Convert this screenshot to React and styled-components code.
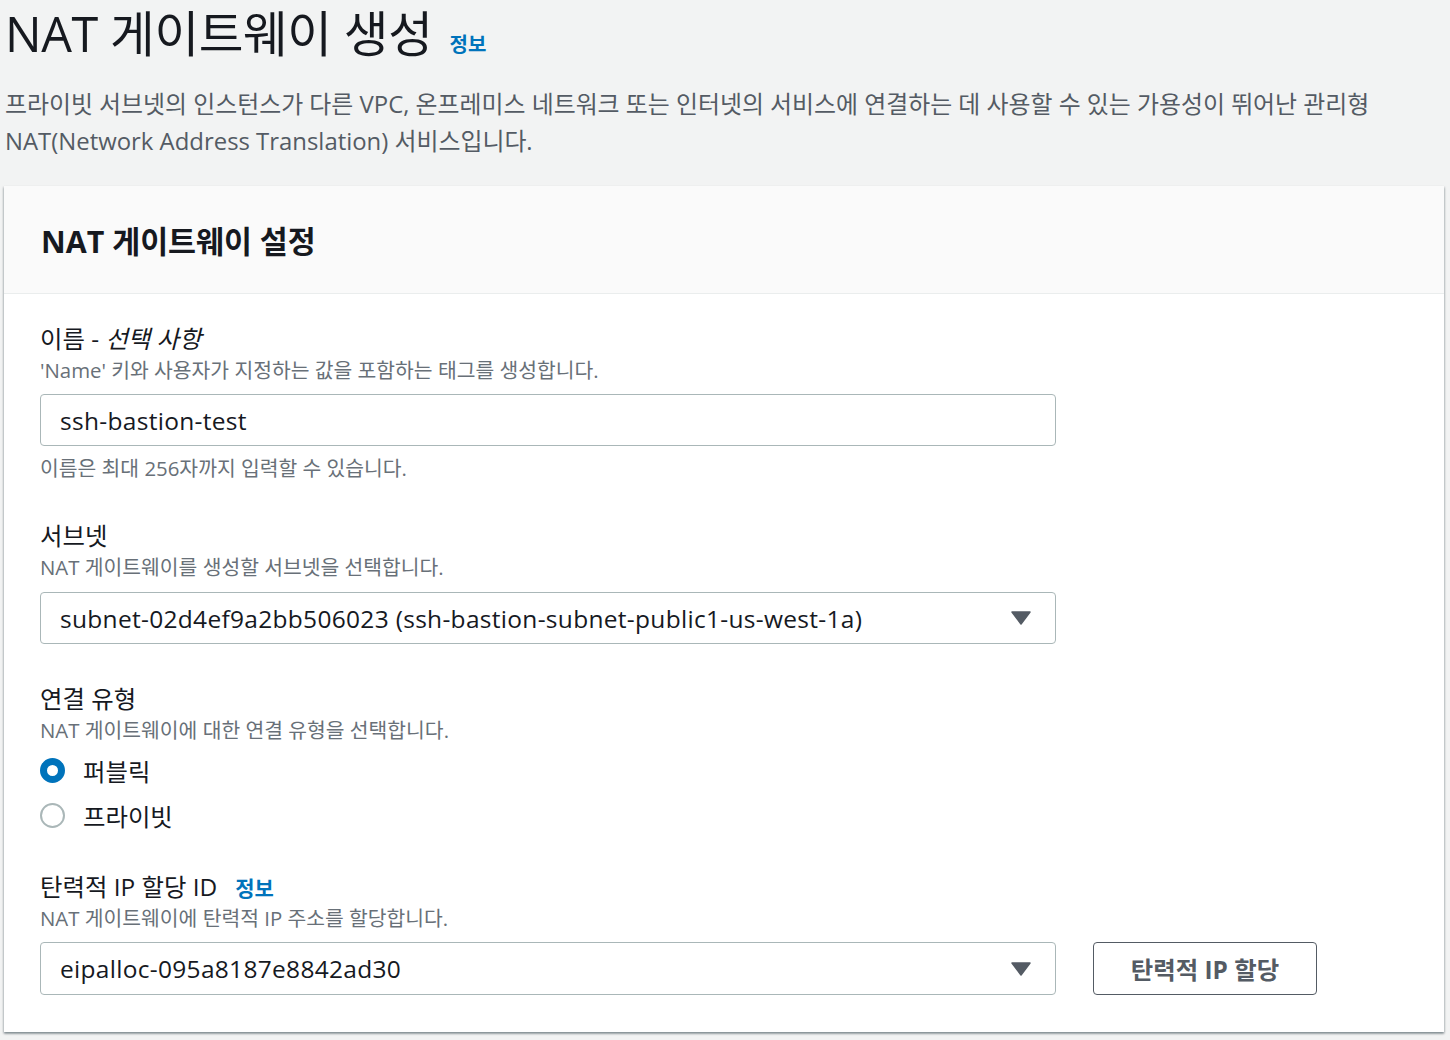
import React from "react";
import styled, { createGlobalStyle } from "styled-components";

const GlobalStyle = createGlobalStyle`
  html, body {
    margin: 0;
    padding: 0;
    background: #f2f3f3;
  }
  body {
    font-family: "Open Sans", "Noto Sans CJK KR", sans-serif;
    color: #16191f;
  }
`;

const Page = styled.div`
  width: 1450px;
  height: 1040px;
  padding: 0 6px 0 4px;
  box-sizing: border-box;
  overflow: hidden;
`;

const TitleRow = styled.div`
  display: flex;
  align-items: baseline;
  gap: 17px;
  padding-left: 1px;
  height: 70px;
`;

const Title = styled.h1`
  margin: 0;
  font-size: 48.6px;
  font-weight: 400;
  line-height: 66px;
  color: #16191f;
  letter-spacing: -0.4px;
`;

const InfoLink = styled.a`
  font-size: ${(p) => p.size || 20}px;
  font-weight: 700;
  color: #0073bb;
  text-decoration: none;
  cursor: pointer;
`;

const Lead = styled.p`
  margin: 15px 0 0 1px;
  font-size: 23.9px;
  line-height: 37px;
  color: #545b64;
  max-width: 1400px;
`;

const Card = styled.section`
  margin-top: 27px;
  background: #ffffff;
  box-shadow: 0 2px 2px 0 rgba(0, 28, 36, 0.3), 1px 1px 2px 0 rgba(0, 28, 36, 0.15),
    -1px 1px 2px 0 rgba(0, 28, 36, 0.15);
`;

const CardHeader = styled.header`
  height: 107px;
  display: flex;
  align-items: center;
  padding: 0 37px;
  background: #fafafa;
  border-bottom: 1px solid #eaeded;
`;

const CardTitle = styled.h2`
  margin: 0;
  font-size: 30.4px;
  font-weight: 700;
  color: #16191f;
`;

const CardBody = styled.div`
  padding: 29px 36px 37px;
`;

const Field = styled.div`
  margin-top: ${(p) => p.gap || 0}px;
`;

const LabelRow = styled.div`
  display: flex;
  align-items: center;
  gap: 18px;
  height: 32px;
`;

const Label = styled.label`
  font-size: 24.4px;
  line-height: 32px;
  color: #16191f;

  em {
    font-style: italic;
  }
`;

const Hint = styled.div`
  font-size: 20.4px;
  line-height: 30px;
  color: #687078;
  margin-top: ${(p) => p.top || 0}px;
`;

const Control = styled.div`
  margin-top: ${(p) => p.top || 9}px;
  display: flex;
  align-items: center;
  gap: 37px;
`;

const Box = styled.div`
  position: relative;
  width: 1016px;
  height: ${(p) => p.h || 52}px;
  box-sizing: border-box;
  border: 1px solid #aab7b8;
  border-radius: 4px;
  background: #ffffff;
  display: flex;
  align-items: center;
  padding: 0 19px;
  font-size: 24.5px;
  letter-spacing: 0.3px;
  color: #16191f;
`;

const Caret = styled.svg`
  position: absolute;
  right: 24px;
  top: 50%;
  margin-top: -7px;
  width: 20px;
  height: 14px;
`;

const RadioList = styled.div`
  margin-top: 3px;
`;

const RadioRow = styled.div`
  display: flex;
  align-items: center;
  gap: 18px;
  height: 45px;
  font-size: 24.4px;
  color: #16191f;
`;

const RadioDot = styled.span`
  width: 25px;
  height: 25px;
  box-sizing: border-box;
  border-radius: 50%;
  border: ${(p) => (p.checked ? "7px solid #0073bb" : "2px solid #aab7b8")};
  background: #ffffff;
`;

const Button = styled.button`
  width: 224px;
  height: 53px;
  box-sizing: border-box;
  border: 1.5px solid #545b64;
  border-radius: 4px;
  background: #ffffff;
  font-family: inherit;
  font-size: 24.4px;
  font-weight: 700;
  color: #545b64;
  cursor: pointer;
`;

const Select = ({ value, h }) => (
  <Box h={h}>
    {value}
    <Caret viewBox="0 0 20 14">
      <path d="M1 1 L19 1 L10 13 Z" fill="#545b64" stroke="#545b64" strokeWidth="1.5" strokeLinejoin="round" />
    </Caret>
  </Box>
);

export default function App() {
  return (
    <Page>
      <GlobalStyle />
      <TitleRow>
        <Title>NAT 게이트웨이 생성</Title>
        <InfoLink>정보</InfoLink>
      </TitleRow>
      <Lead>
        프라이빗 서브넷의 인스턴스가 다른 VPC, 온프레미스 네트워크 또는 인터넷의 서비스에 연결하는 데 사용할 수 있는 가용성이 뛰어난 관리형
        NAT(Network Address Translation) 서비스입니다.
      </Lead>

      <Card>
        <CardHeader>
          <CardTitle>NAT 게이트웨이 설정</CardTitle>
        </CardHeader>
        <CardBody>
          <Field>
            <LabelRow>
              <Label>
                이름 - <em>선택 사항</em>
              </Label>
            </LabelRow>
            <Hint>'Name' 키와 사용자가 지정하는 값을 포함하는 태그를 생성합니다.</Hint>
            <Control>
              <Box>ssh-bastion-test</Box>
            </Control>
            <Hint top={7}>이름은 최대 256자까지 입력할 수 있습니다.</Hint>
          </Field>

          <Field gap={37}>
            <LabelRow>
              <Label>서브넷</Label>
            </LabelRow>
            <Hint>NAT 게이트웨이를 생성할 서브넷을 선택합니다.</Hint>
            <Control top={10}>
              <Select value="subnet-02d4ef9a2bb506023 (ssh-bastion-subnet-public1-us-west-1a)" />
            </Control>
          </Field>

          <Field gap={39}>
            <LabelRow>
              <Label>연결 유형</Label>
            </LabelRow>
            <Hint>NAT 게이트웨이에 대한 연결 유형을 선택합니다.</Hint>
            <RadioList>
              <RadioRow>
                <RadioDot checked />
                퍼블릭
              </RadioRow>
              <RadioRow>
                <RadioDot />
                프라이빗
              </RadioRow>
            </RadioList>
          </Field>

          <Field gap={33}>
            <LabelRow>
              <Label>탄력적 IP 할당 ID</Label>
              <InfoLink size={21}>정보</InfoLink>
            </LabelRow>
            <Hint>NAT 게이트웨이에 탄력적 IP 주소를 할당합니다.</Hint>
            <Control>
              <Select value="eipalloc-095a8187e8842ad30" h={53} />
              <Button>탄력적 IP 할당</Button>
            </Control>
          </Field>
        </CardBody>
      </Card>
    </Page>
  );
}
